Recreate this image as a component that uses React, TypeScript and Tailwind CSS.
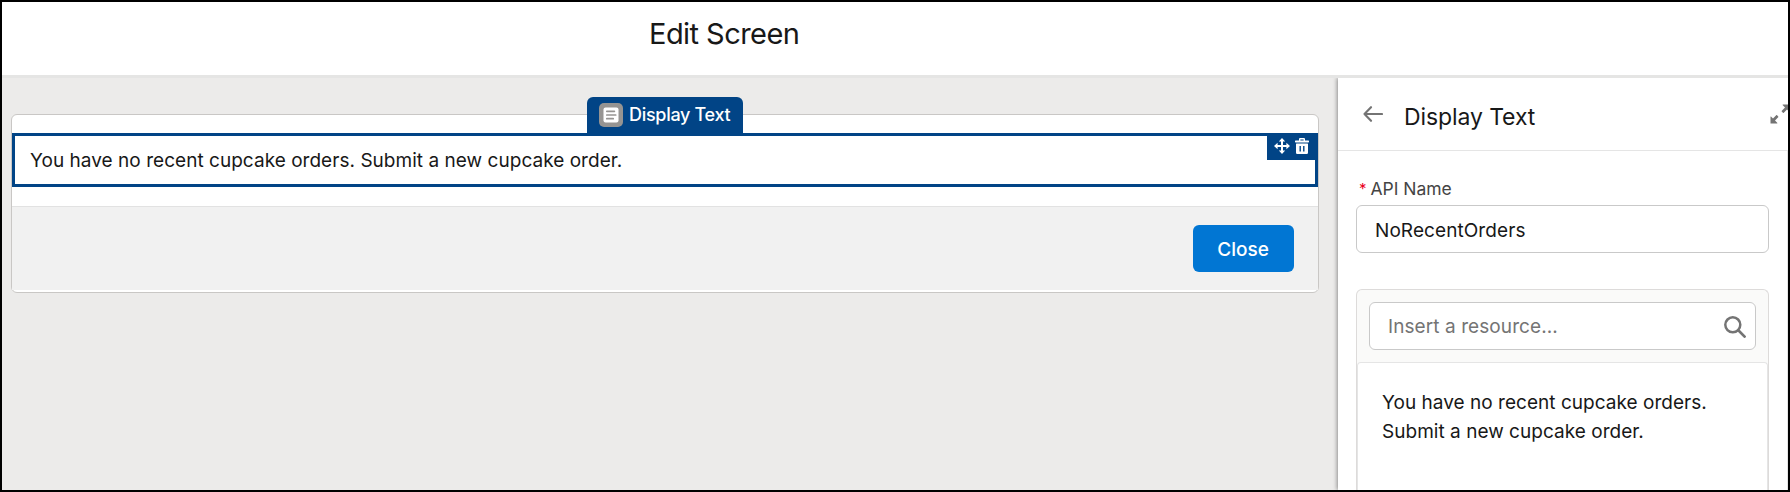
import { useState } from 'react'

function DisplayTextIcon() {
  return (
    <svg viewBox="0 0 24 24" className="size-6 shrink-0">
      <rect width="24" height="24" rx="5" fill="#969492" />
      <rect x="4.5" y="4.5" width="15" height="15" rx="2" fill="#fff" />
      <path d="M7.8 8.3h7.6M7.8 12h8.9M7.8 15.7h6.4" stroke="#969492" strokeWidth="1.7" strokeLinecap="round" />
    </svg>
  )
}

function MoveIcon() {
  return (
    <svg viewBox="0 0 16 16" className="size-4" fill="#fff">
      <path d="M8 0l3.2 3.6H9v3.4h3.4V4.8L16 8l-3.6 3.2V9H9v3.4h2.2L8 16l-3.2-3.6H7V9H3.6v2.2L0 8l3.6-3.2V7H7V3.6H4.8z" />
    </svg>
  )
}

function TrashIcon() {
  return (
    <svg viewBox="0 0 14 16" className="h-4 w-3.5" fill="#fff">
      <path fillRule="evenodd" d="M4 2.4V1.3C4 .5 4.5 0 5.3 0h3.4C9.5 0 10 .5 10 1.3v1.1h3.4c.4 0 .6.2.6.6v.8c0 .4-.2.6-.6.6H.6C.2 4.4 0 4.2 0 3.8V3c0-.4.2-.6.6-.6zM5.4 2.4h3.2V1.4H5.4z" />
      <path fillRule="evenodd" d="M1.5 5.6h11c.3 0 .5.2.5.5v8.3c0 .9-.7 1.6-1.6 1.6H2.6C1.7 16 1 15.3 1 14.4V6.1c0-.3.2-.5.5-.5zM4.5 8v5.6h1.4V8zM8.1 8v5.6h1.4V8z" />
    </svg>
  )
}

function BackIcon() {
  return (
    <svg viewBox="0 0 20 16" className="h-4 w-5" fill="none" stroke="#747474" strokeWidth="2.1" strokeLinecap="round" strokeLinejoin="round">
      <path d="M19 8H1.5M8 1.2L1.5 8L8 14.8" />
    </svg>
  )
}

function ExpandIcon() {
  return (
    <svg viewBox="0 0 20 20" className="size-5 shrink-0" fill="#747474">
      <path d="M13 .5h6.5V7c0 .5-.4.6-.7.3L17 5.5 13.8 8.7c-.3.3-.6.3-.9 0l-1.100-1.100c-.3-.3-.3-.6 0-.9L15 3.5l-2.2-2.2c-.3-.3-.2-.8.2-.8z" />
      <path d="M7 19.5H.5V13c0-.5.4-.6.7-.3L3 14.5l3.2-3.2c.3-.3.6-.3.9 0l1.100 1.100c.3.3.3.6 0 .9L5 16.5l2.2 2.2c.3.3.2.8-.2.8z" />
    </svg>
  )
}

function SearchIcon() {
  return (
    <svg viewBox="0 0 22 22" className="mt-px size-[22px] shrink-0" fill="none" stroke="#747474">
      <circle cx="8.8" cy="8.8" r="7.5" strokeWidth="2.5" />
      <path d="M14.3 14.3L20.6 20.6" strokeWidth="2.7" strokeLinecap="round" />
    </svg>
  )
}

function ScreenCanvas({ text }: { text: string }) {
  return (
    <main className="flex-1 pt-9 pl-[9px] pr-[19px]">
      <div className="h-[179px] rounded-md border border-[#c9c7c5] bg-white pt-[18px]">
        <div className="relative h-[54px] border-[3px] border-[#014486] px-[15px] pt-[11px]">
          <p className="text-[19px] leading-7 tracking-[0.035px] whitespace-nowrap">{text}</p>
          <div className="absolute -top-[39px] left-[572px] flex h-[37px] w-[156px] items-center gap-1.5 rounded-t-md bg-[#014486] pb-px pl-3 text-[18px] tracking-[-0.3px] whitespace-nowrap text-white">
            <DisplayTextIcon />
            <span className="-mt-px font-[450]">Display Text</span>
          </div>
          <div className="absolute -top-[3px] -right-[3px] flex h-[27px] w-[51px] items-center gap-[5px] bg-[#014486] pb-px pl-[7px]">
            <MoveIcon />
            <TrashIcon />
          </div>
        </div>
        <div className="mt-[19px] flex h-[84px] justify-end border-t border-[#e2e2e2] bg-[#f1f1f1] pt-[18px] pr-6">
          <button className="h-[47px] w-[101px] rounded-md bg-[#0176d3] pt-[3px] pr-px text-[19px] font-medium text-white">Close</button>
        </div>
      </div>
    </main>
  )
}

export default function App() {
  const [apiName, setApiName] = useState('NoRecentOrders')
  const text = 'You have no recent cupcake orders. Submit a new cupcake order.'

  return (
    <div className="flex h-[492px] w-[1790px] flex-col overflow-hidden border-2 border-black bg-white font-[Inter,sans-serif] text-[#181818]">
      <header className="h-[76px] shrink-0 border-b-[3px] border-[#e5e5e4] pt-3 pl-[647px]">
        <h1 className="text-[29px] leading-10 tracking-[-0.55px] whitespace-nowrap">Edit Screen</h1>
      </header>

      <div className="flex min-h-0 flex-1 overflow-hidden bg-[#ecebea]">
        <ScreenCanvas text={text} />

        <aside className="w-[450px] shrink-0 bg-white shadow-[-1px_0_4px_rgba(0,0,0,0.4)]">
          <div className="flex h-[73px] items-start overflow-hidden border-b border-[#e5e5e5] pl-[25px]">
            <div className="mt-[28px]"><BackIcon /></div>
            <h2 className="mt-[23px] ml-[21px] w-[366px] shrink-0 text-[23px] leading-8 tracking-[-0.1px]">Display Text</h2>
            <div className="mt-[26px]"><ExpandIcon /></div>
          </div>

          <div className="h-[339px] border-r border-[#e5e5e5] pt-6 pr-[18px] pl-[18px]">
            <label className="mb-0.5 flex h-7 items-center gap-1 pl-[3px] text-[17.5px] tracking-[-0.03px] text-[#444]">
              <span className="text-[15px] text-[#ea001e]">*</span>
              API Name
            </label>
            <input
              className="block h-12 w-full rounded-md border border-[#c9c9c9] bg-white px-[18px] pt-0.5 text-[19px] tracking-[0.08px] outline-none"
              value={apiName}
              onChange={(e) => setApiName(e.target.value)}
            />

            <div className="mt-9 rounded-t-md border border-b-0 border-[#dddbda] bg-[#fafaf9]">
              <div className="h-[73px] p-3">
                <div className="flex h-12 items-center rounded-md border border-[#c9c9c9] bg-white pr-[9px] pl-[18px]">
                  <input className="min-w-0 flex-1 pt-0.5 text-[19px] tracking-[0.08px] outline-none placeholder:text-[#747474]" placeholder="Insert a resource..." />
                  <SearchIcon />
                </div>
              </div>
              <div className="-mt-px h-[151px] rounded-t border border-b-0 border-[#e5e5e5] bg-white pt-[25px] pl-6 text-[19px] leading-[29px] tracking-[0.03px]">
                You have no recent cupcake orders.
                <br />
                Submit a new cupcake order.
              </div>
            </div>
          </div>
        </aside>
      </div>
    </div>
  )
}
